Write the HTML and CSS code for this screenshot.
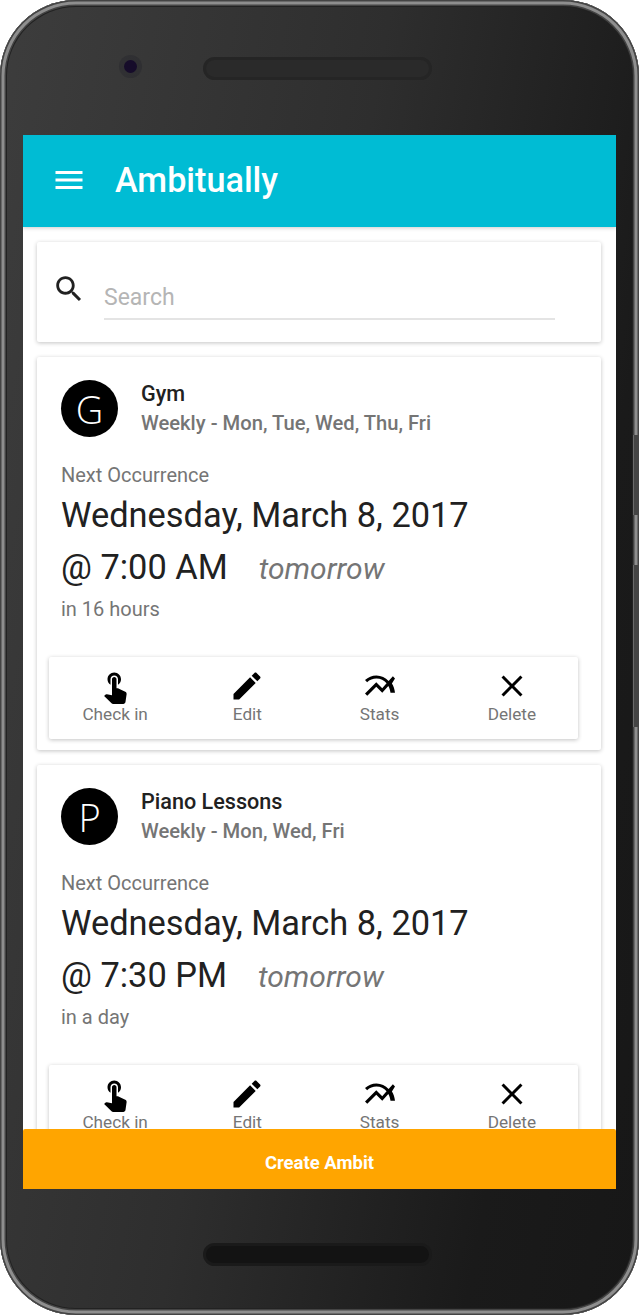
FILE: index.html
```html
<!DOCTYPE html>
<html lang="en">
<head>
<meta charset="utf-8">
<title>Ambitually</title>
<link rel="stylesheet" href="styles.css">
</head>
<body>
<div class="phone">
  <span class="side-key side-key-power"></span>
  <span class="side-key side-key-volume"></span>
  <div class="bezel-top">
    <span class="camera"></span>
    <span class="speaker"></span>
  </div>
  <div class="screen">
    <header class="app-bar">
      <svg class="menu-icon" viewBox="0 0 24 24"><path d="M3 18h18v-2H3v2zm0-5h18v-2H3v2zm0-7v2h18V6H3z"/></svg>
      <h1 class="app-title">Ambitually</h1>
    </header>
    <main class="list">
      <section class="card search-card">
        <svg class="search-icon" viewBox="0 0 24 24"><path d="M15.5 14h-.79l-.28-.27C15.41 12.59 16 11.11 16 9.5 16 5.91 13.09 3 9.5 3S3 5.91 3 9.5 5.91 16 9.5 16c1.61 0 3.09-.59 4.23-1.57l.27.28v.79l5 4.99L20.49 19l-4.99-5zm-6 0C7.01 14 5 11.99 5 9.5S7.01 5 9.5 5 14 7.01 14 9.5 11.99 14 9.5 14z"/></svg>
        <div class="search-field">Search</div>
      </section>

      <article class="card ambit">
        <div class="ambit-head">
          <div class="avatar">G</div>
          <div class="ambit-meta">
            <div class="ambit-name">Gym</div>
            <div class="ambit-schedule">Weekly - Mon, Tue, Wed, Thu, Fri</div>
          </div>
        </div>
        <div class="next-label">Next Occurrence</div>
        <div class="next-date">Wednesday, March 8, 2017</div>
        <div class="next-time-row">
          <span class="next-time">@ 7:00 AM</span>
          <span class="next-relative">tomorrow</span>
        </div>
        <div class="next-until">in 16 hours</div>
        <div class="actions">
          <div class="action">
            <svg class="action-icon" viewBox="0 0 24 24"><path d="M9 11.24V7.5C9 6.12 10.12 5 11.5 5S14 6.12 14 7.5v3.74c1.21-.81 2-2.18 2-3.74C16 5.01 13.99 3 11.5 3S7 5.01 7 7.5c0 1.56.79 2.93 2 3.74zm9.84 4.63l-4.54-2.26c-.17-.07-.35-.11-.54-.11H13v-6c0-.83-.67-1.5-1.5-1.5S10 6.67 10 7.5v10.74l-3.43-.72c-.08-.01-.15-.03-.24-.03-.31 0-.59.13-.79.33l-.79.8 4.94 4.94c.27.27.65.44 1.06.44h6.79c.75 0 1.33-.55 1.44-1.28l.75-5.27c.01-.07.02-.14.02-.2 0-.62-.38-1.16-.91-1.38z"/></svg>
            <span class="action-label">Check in</span>
          </div>
          <div class="action">
            <svg class="action-icon" viewBox="0 0 24 24"><path d="M3 17.25V21h3.75L17.81 9.94l-3.75-3.75L3 17.25zM20.71 7.04c.39-.39.39-1.02 0-1.41l-2.34-2.34c-.39-.39-1.02-.39-1.41 0l-1.83 1.83 3.75 3.75 1.83-1.83z"/></svg>
            <span class="action-label">Edit</span>
          </div>
          <div class="action">
            <svg class="action-icon" viewBox="0 0 24 24"><path d="M22 6.92l-1.41-1.41-2.85 3.21C15.68 6.4 12.83 5 9.61 5 6.72 5 4.07 6.16 2 8l1.42 1.42C5.12 7.93 7.27 7 9.61 7c2.74 0 5.09 1.26 6.77 3.24l-2.88 3.24-4-4L2 16.99l1.5 1.5 6-6.01 4 4 4.05-4.55c.75 1.35 1.25 2.9 1.44 4.55H21.99c-.22-2.3-.95-4.39-2.04-6.14L22 6.92z"/></svg>
            <span class="action-label">Stats</span>
          </div>
          <div class="action">
            <svg class="action-icon" viewBox="0 0 24 24"><path d="M19 6.41L17.59 5 12 10.59 6.41 5 5 6.41 10.59 12 5 17.59 6.41 19 12 13.41 17.59 19 19 17.59 13.41 12z"/></svg>
            <span class="action-label">Delete</span>
          </div>
        </div>
      </article>

      <article class="card ambit">
        <div class="ambit-head">
          <div class="avatar">P</div>
          <div class="ambit-meta">
            <div class="ambit-name">Piano Lessons</div>
            <div class="ambit-schedule">Weekly - Mon, Wed, Fri</div>
          </div>
        </div>
        <div class="next-label">Next Occurrence</div>
        <div class="next-date">Wednesday, March 8, 2017</div>
        <div class="next-time-row">
          <span class="next-time">@ 7:30 PM</span>
          <span class="next-relative">tomorrow</span>
        </div>
        <div class="next-until">in a day</div>
        <div class="actions">
          <div class="action">
            <svg class="action-icon" viewBox="0 0 24 24"><path d="M9 11.24V7.5C9 6.12 10.12 5 11.5 5S14 6.12 14 7.5v3.74c1.21-.81 2-2.18 2-3.74C16 5.01 13.99 3 11.5 3S7 5.01 7 7.5c0 1.56.79 2.93 2 3.74zm9.84 4.63l-4.54-2.26c-.17-.07-.35-.11-.54-.11H13v-6c0-.83-.67-1.5-1.5-1.5S10 6.67 10 7.5v10.74l-3.43-.72c-.08-.01-.15-.03-.24-.03-.31 0-.59.13-.79.33l-.79.8 4.94 4.94c.27.27.65.44 1.06.44h6.79c.75 0 1.33-.55 1.44-1.28l.75-5.27c.01-.07.02-.14.02-.2 0-.62-.38-1.16-.91-1.38z"/></svg>
            <span class="action-label">Check in</span>
          </div>
          <div class="action">
            <svg class="action-icon" viewBox="0 0 24 24"><path d="M3 17.25V21h3.75L17.81 9.94l-3.75-3.75L3 17.25zM20.71 7.04c.39-.39.39-1.02 0-1.41l-2.34-2.34c-.39-.39-1.02-.39-1.41 0l-1.83 1.83 3.75 3.75 1.83-1.83z"/></svg>
            <span class="action-label">Edit</span>
          </div>
          <div class="action">
            <svg class="action-icon" viewBox="0 0 24 24"><path d="M22 6.92l-1.41-1.41-2.85 3.21C15.68 6.4 12.83 5 9.61 5 6.72 5 4.07 6.16 2 8l1.42 1.42C5.12 7.93 7.27 7 9.61 7c2.74 0 5.09 1.26 6.77 3.24l-2.88 3.24-4-4L2 16.99l1.5 1.5 6-6.01 4 4 4.05-4.55c.75 1.35 1.25 2.9 1.44 4.55H21.99c-.22-2.3-.95-4.39-2.04-6.14L22 6.92z"/></svg>
            <span class="action-label">Stats</span>
          </div>
          <div class="action">
            <svg class="action-icon" viewBox="0 0 24 24"><path d="M19 6.41L17.59 5 12 10.59 6.41 5 5 6.41 10.59 12 5 17.59 6.41 19 12 13.41 17.59 19 19 17.59 13.41 12z"/></svg>
            <span class="action-label">Delete</span>
          </div>
        </div>
      </article>
    </main>
    <button class="create-button">Create Ambit</button>
  </div>
  <div class="bezel-bottom">
    <span class="speaker speaker-bottom"></span>
  </div>
</div>
</body>
</html>
```
FILE: styles.css
```css
* { box-sizing: border-box; }
html, body { margin: 0; padding: 0; background: #fff; }
body { font-family: Roboto, "Liberation Sans", sans-serif; width: 639px; height: 1316px; overflow: hidden; }

.phone {
  position: relative;
  width: 639px;
  height: 1315px;
  border-radius: 76px;
  background: linear-gradient(100deg, #3d3d3d 0%, #2e2e2e 45%, #1a1a1a 80%, #171717 100%);
  box-shadow: inset 0 0 0 1.5px #444, inset 0 0 0 4.5px #8e8e8e, inset 0 0 0 6px #444, inset 0 0 0 7px #222;
  padding: 0 23px;
  display: flex;
  flex-direction: column;
}
.side-key { position: absolute; right: 0; width: 6px; background: #444; border-left: 1px solid #6a6a6a; }
.side-key-power { top: 435px; height: 80px; }
.side-key-volume { top: 565px; height: 162px; }

.bezel-top { height: 135px; display: flex; align-items: flex-start; padding: 57px 0 0 95px; flex: none; }
.camera { width: 13px; height: 13px; margin: 3px 0 0 6px; background: #160c2a; border-radius: 50%; box-shadow: 0 0 0 5px rgba(30,30,40,.3); }
.speaker { display: block; width: 229px; height: 23px; margin-left: 66px; background: #2a2a2a; border: 3px solid #252525; border-radius: 12px; }

.bezel-bottom { flex: 1; display: flex; justify-content: center; padding-top: 54px; }
.speaker-bottom { margin: 0 0 0 -5px; background: #131313; border-color: #1a1a1a; }

.screen { width: 593px; height: 1054px; flex: none; background: #fff; display: flex; flex-direction: column; overflow: hidden; }

.app-bar { flex: none; height: 92px; background: #00bcd4; display: flex; align-items: center; padding: 0 0 3px 28px; position: relative; z-index: 2; box-shadow: 0 1px 4px rgba(0,0,0,.2); }
.menu-icon { width: 36px; height: 36px; fill: #fff; flex: none; }
.app-title { margin: 0 0 0 28px; font-size: 34.2px; font-weight: 500; color: #fff; }

.list { flex: 1; min-height: 0; overflow: hidden; padding: 15px 15px 0 14px; display: flex; flex-direction: column; gap: 15px; }
.card { flex: none; background: #fff; border-radius: 2px; box-shadow: 0 1px 4px rgba(0,0,0,.24); }

.search-card { height: 100px; display: flex; padding: 30px 46px 0 15px; }
.search-icon { width: 34px; height: 34px; flex: none; fill: #212121; }
.search-field { flex: 1; margin: 10px 0 0 18px; height: 38px; padding-top: 2px; font-size: 23px; line-height: 28px; color: #b5b5b5; border-bottom: 2px solid #e4e4e4; }

.ambit { padding: 23px 23px 11px 24px; height: 393px; }
.ambit-head { display: flex; align-items: flex-start; gap: 23px; }
.avatar { width: 57px; height: 57px; flex: none; border-radius: 50%; background: #000; color: #fff; display: flex; align-items: center; justify-content: center; font-family: "Open Sans", sans-serif; font-weight: 300; font-size: 38px; line-height: 1; }
.ambit-name { font-size: 21.6px; line-height: 28px; font-weight: 500; color: #212121; }
.ambit-schedule { margin-top: 1px; font-size: 20.2px; line-height: 28px; font-weight: 500; color: #757575; }

.next-label { margin-top: 24px; font-size: 20px; line-height: 28px; color: #757575; }
.next-date { margin-top: 4px; font-size: 34.4px; line-height: 44px; color: #212121; }
.next-time-row { margin-top: 8px; display: flex; align-items: center; height: 44px; }
.next-time { font-size: 34.4px; line-height: 44px; color: #212121; }
.next-relative { margin-left: 31px; padding-top: 4px; font-size: 30px; line-height: 44px; font-style: italic; color: #757575; }
.next-until { margin-top: 6px; font-size: 20px; line-height: 28px; color: #757575; }

.actions { margin: 34px 0 0 -12px; width: 529px; height: 82px; display: flex; background: #fff; border-radius: 2px; box-shadow: 0 1px 4px rgba(0,0,0,.24); }
.action { flex: 1; display: flex; flex-direction: column; align-items: center; padding-top: 11px; }
.action-icon { width: 36px; height: 36px; fill: #000; flex: none; }
.action-label { font-size: 17.2px; line-height: 20px; color: #757575; }

.create-button { flex: none; height: 60px; border: 0; padding: 8px 0 0; border-radius: 2px 2px 0 0; background: #ffa500; color: #fff; font-family: Roboto, sans-serif; font-size: 18.5px; font-weight: 700; position: relative; z-index: 2; }
```
